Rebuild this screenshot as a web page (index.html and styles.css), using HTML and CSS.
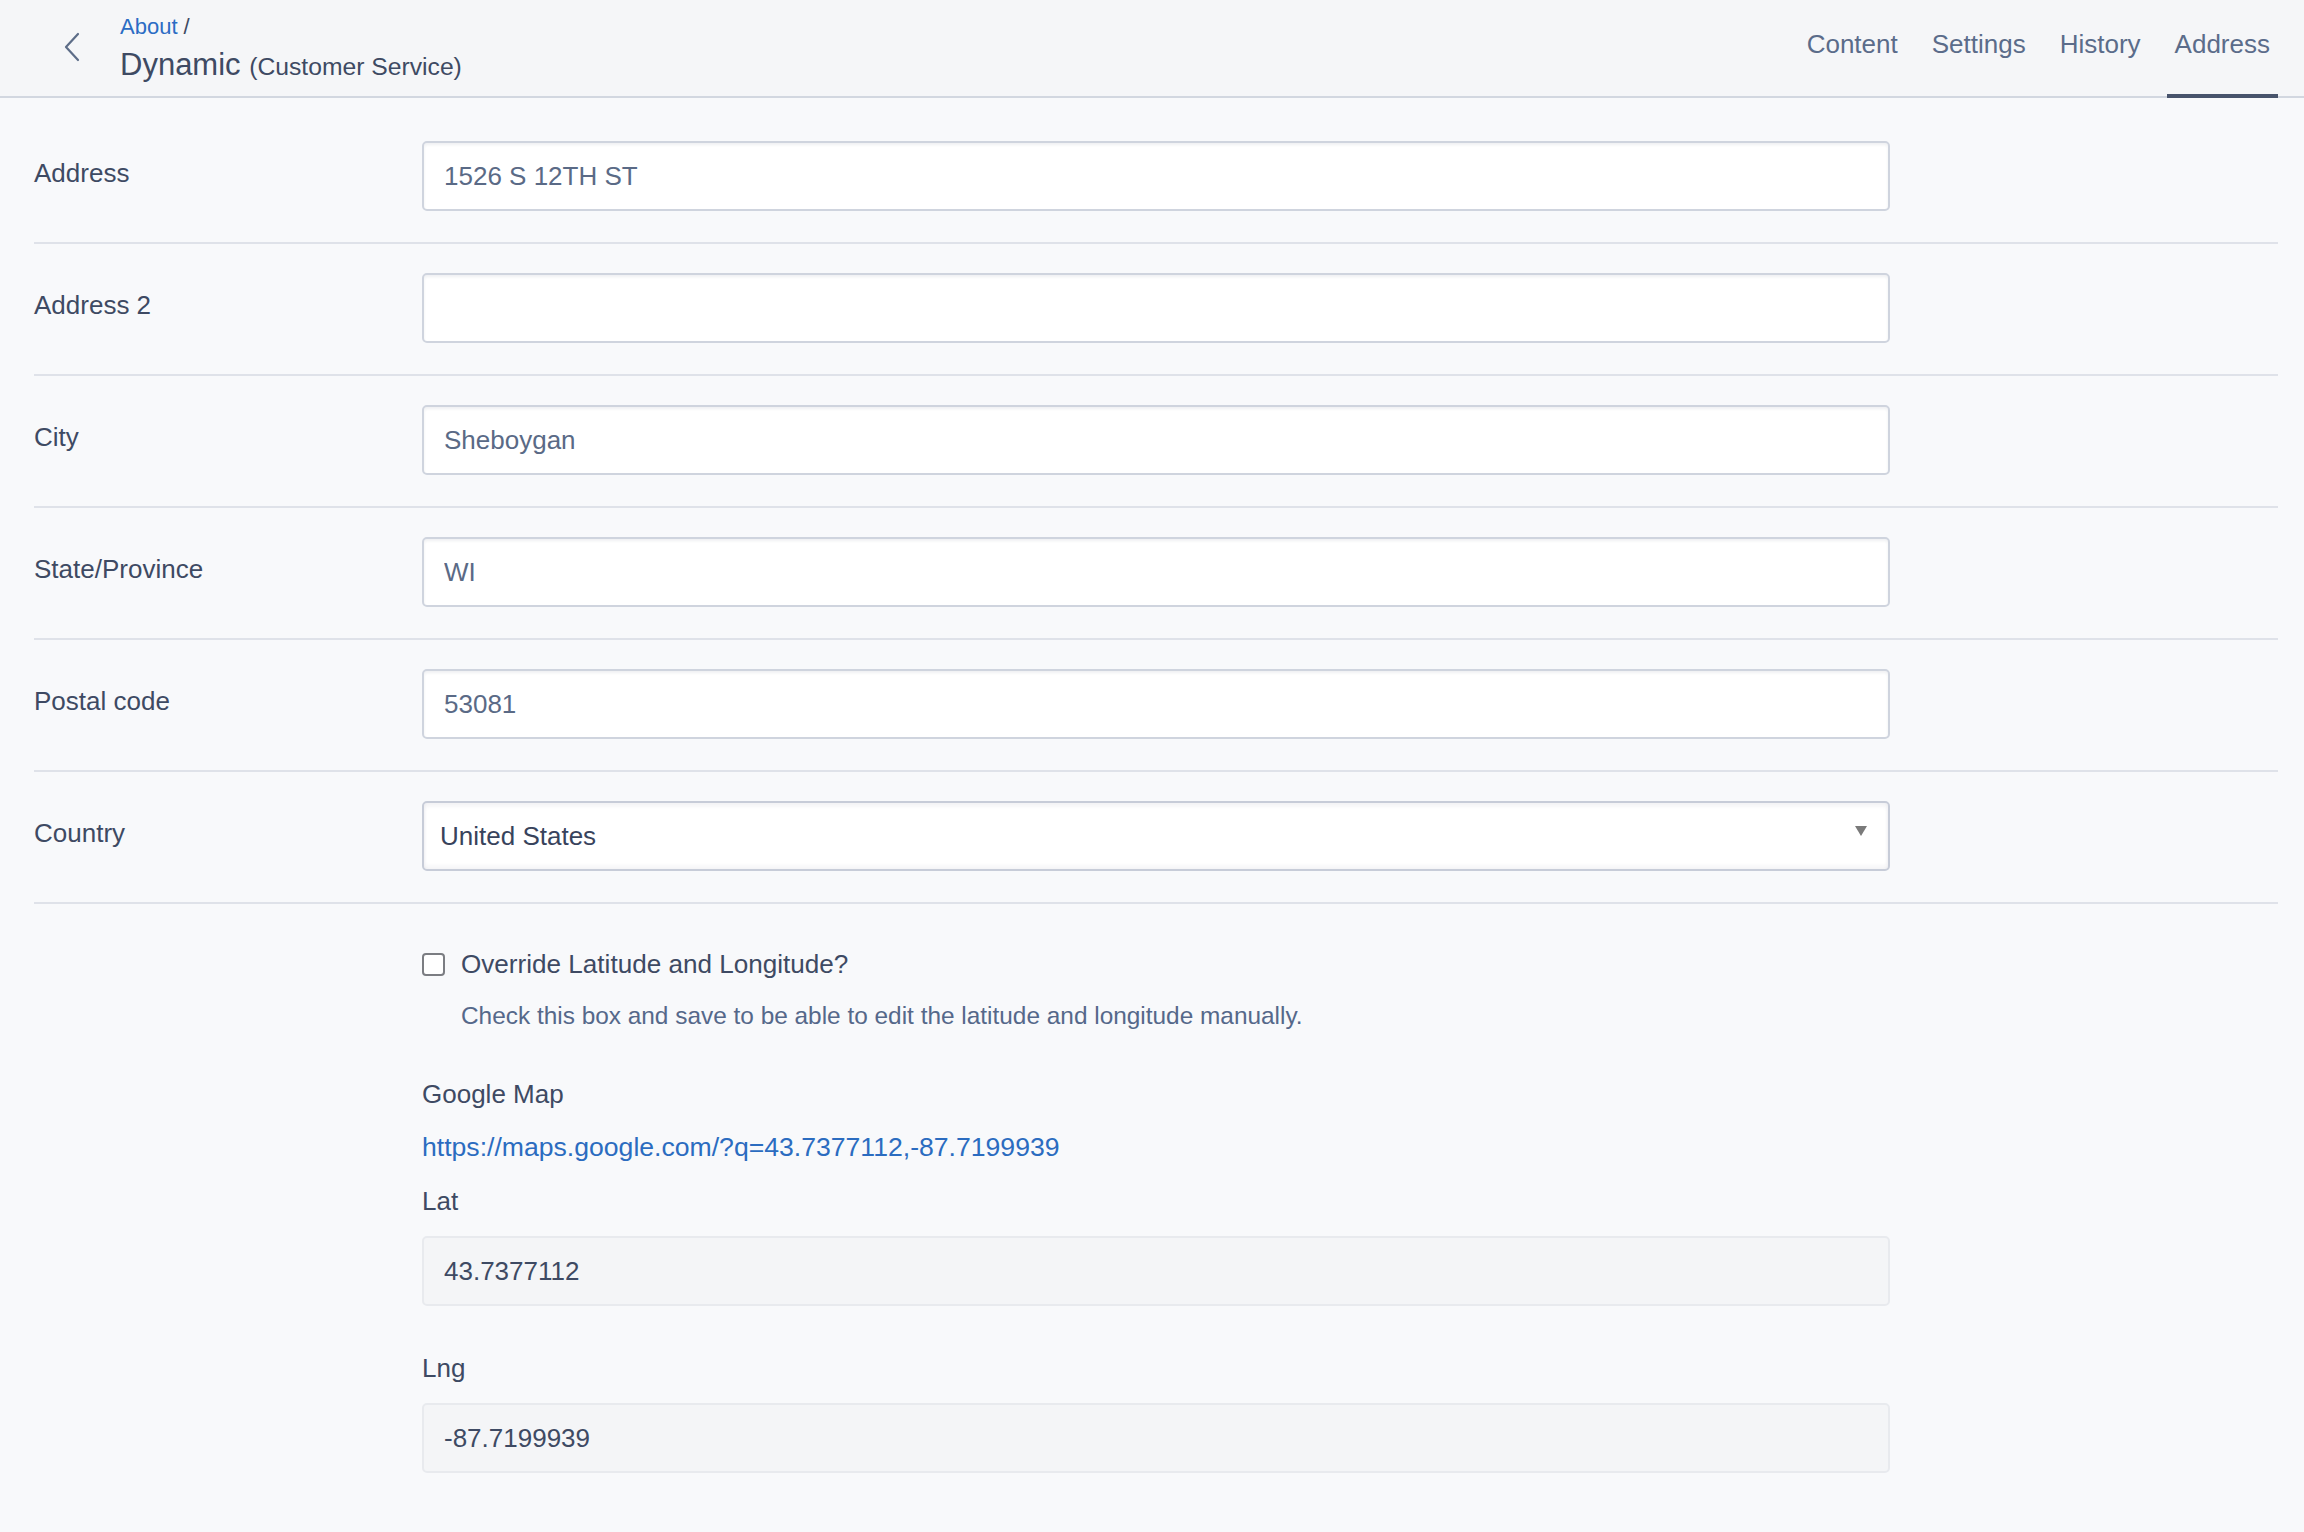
FILE: index.html
```html
<!DOCTYPE html>
<html lang="en">
<head>
<meta charset="utf-8">
<title>Dynamic (Customer Service) - Address</title>
<link rel="stylesheet" href="styles.css">
</head>
<body>
<header class="topbar">
  <div class="topbar-left">
    <a class="back" href="#" aria-label="Back">
      <svg width="18" height="30" viewBox="0 0 18 30" fill="none"><path d="M15 2 L3 15 L15 28" stroke="#5d6d88" stroke-width="2.2" stroke-linecap="round" stroke-linejoin="round"/></svg>
    </a>
    <div class="title-block">
      <div class="crumbs"><a href="#" class="crumb-link">About</a> /</div>
      <h1 class="title">Dynamic <span class="title-sub">(Customer Service)</span></h1>
    </div>
  </div>
  <nav class="tabs">
    <a href="#" class="tab">Content</a>
    <a href="#" class="tab">Settings</a>
    <a href="#" class="tab">History</a>
    <a href="#" class="tab tab-active">Address</a>
  </nav>
</header>

<main class="form">
  <div class="row">
    <label class="label">Address</label>
    <input class="field" type="text" value="1526 S 12TH ST">
  </div>
  <div class="row">
    <label class="label">Address 2</label>
    <input class="field" type="text" value="">
  </div>
  <div class="row">
    <label class="label">City</label>
    <input class="field" type="text" value="Sheboygan">
  </div>
  <div class="row">
    <label class="label">State/Province</label>
    <input class="field" type="text" value="WI">
  </div>
  <div class="row">
    <label class="label">Postal code</label>
    <input class="field" type="text" value="53081">
  </div>
  <div class="row">
    <label class="label">Country</label>
    <div class="select-wrap">
      <select class="select">
        <option>United States</option>
      </select>
      <span class="select-arrow"></span>
    </div>
  </div>

  <section class="geo">
    <label class="check-line">
      <span class="checkbox"></span>
      <span>Override Latitude and Longitude?</span>
    </label>
    <p class="help">Check this box and save to be able to edit the latitude and longitude manually.</p>
    <div class="geo-label">Google Map</div>
    <a class="map-link" href="#">https://maps.google.com/?q=43.7377112,-87.7199939</a>
    <div class="geo-label">Lat</div>
    <input class="field field-ro" type="text" value="43.7377112" readonly>
    <div class="geo-label geo-label-lng">Lng</div>
    <input class="field field-ro" type="text" value="-87.7199939" readonly>
  </section>
</main>
</body>
</html>
```

FILE: styles.css
```css
* { box-sizing: border-box; }

html, body {
  margin: 0;
  padding: 0;
}

body {
  background: #f8f9fb;
  font-family: "Liberation Sans", Arial, Helvetica, sans-serif;
  color: #3e4a63;
  min-height: 1532px;
}

a { text-decoration: none; }

/* Header */
.topbar {
  display: flex;
  justify-content: space-between;
  align-items: stretch;
  height: 98px;
  background: #f5f6f8;
  border-bottom: 2px solid #d2d7e0;
}

.topbar-left {
  display: flex;
  align-items: center;
  padding-left: 63px;
}

.back {
  display: flex;
  width: 18px;
  height: 30px;
  margin-right: 39px;
  margin-bottom: 3px;
}

.title-block {
  display: flex;
  flex-direction: column;
  align-self: flex-start;
  padding-top: 12px;
}

.crumbs {
  font-size: 22px;
  line-height: 30px;
  color: #3e4a63;
}

.crumb-link { color: #2b6cc4; }

.title {
  margin: 3px 0 0;
  font-size: 31px;
  line-height: 40px;
  font-weight: normal;
  color: #3e4a63;
}

.title-sub {
  font-size: 24.7px;
}

.tabs {
  display: flex;
  align-items: stretch;
  gap: 18px;
  padding-right: 26px;
  margin-bottom: -2px;
}

.tab {
  display: flex;
  align-items: center;
  padding: 0 8px 5px;
  font-size: 26px;
  color: #5b6c8a;
  border-bottom: 4px solid transparent;
}

.tab-active {
  border-bottom-color: #48546c;
}

/* Form */
.form {
  padding: 14px 26px 0 34px;
}

.row {
  display: grid;
  grid-template-columns: 388px 1468px;
  align-items: center;
  padding: 29px 0 31px;
  border-bottom: 2px solid #dfe2e9;
}

.label {
  font-size: 26px;
  line-height: 36px;
  color: #3e4a63;
  padding-bottom: 6px;
}

.field {
  display: block;
  width: 1468px;
  height: 70px;
  padding: 0 20px;
  background: #ffffff;
  border: 2px solid #cfd4de;
  border-radius: 5px;
  box-shadow: inset 0 2px 3px rgba(30, 40, 70, 0.07);
  font-family: "Liberation Sans", Arial, Helvetica, sans-serif;
  font-size: 26px;
  color: #5a6a86;
  outline: none;
}

.select-wrap {
  position: relative;
  width: 1468px;
  height: 70px;
}

.select {
  -webkit-appearance: none;
  appearance: none;
  width: 100%;
  height: 100%;
  padding: 0 16px;
  background: #ffffff;
  border: 2px solid #c7ccd8;
  border-radius: 5px;
  box-shadow: inset 0 3px 4px rgba(30, 40, 70, 0.06), inset 0 -3px 4px rgba(30, 40, 70, 0.05);
  font-family: "Liberation Sans", Arial, Helvetica, sans-serif;
  font-size: 26px;
  color: #38435c;
  outline: none;
}

.select-arrow {
  position: absolute;
  right: 23px;
  top: 25px;
  width: 0;
  height: 0;
  border-left: 6px solid transparent;
  border-right: 6px solid transparent;
  border-top: 10px solid #7a7a7a;
}

/* Geo section */
.geo {
  display: flex;
  flex-direction: column;
  align-items: flex-start;
  padding: 42px 0 60px 388px;
}

.check-line {
  display: flex;
  align-items: center;
  gap: 16px;
  font-size: 26.1px;
  line-height: 36px;
  color: #3e4a63;
}

.checkbox {
  display: block;
  width: 23px;
  height: 23px;
  border: 2px solid #7b7d82;
  border-radius: 4px;
  background: #ffffff;
}

.help {
  margin: 17px 0 0 39px;
  font-size: 24.4px;
  line-height: 34px;
  color: #55688a;
}

.geo-label {
  margin-top: 43px;
  font-size: 26px;
  line-height: 36px;
  color: #3e4a63;
}

.map-link {
  margin-top: 17px;
  font-size: 26.6px;
  line-height: 36px;
  color: #2b6cc0;
}

.map-link + .geo-label {
  margin-top: 18px;
}

.geo-label + .field {
  margin-top: 17px;
}

.geo-label-lng {
  margin-top: 44px;
}

.field-ro {
  background: #f4f5f7;
  border-color: #e8eaee;
  box-shadow: none;
  color: #3e4a63;
}
```
